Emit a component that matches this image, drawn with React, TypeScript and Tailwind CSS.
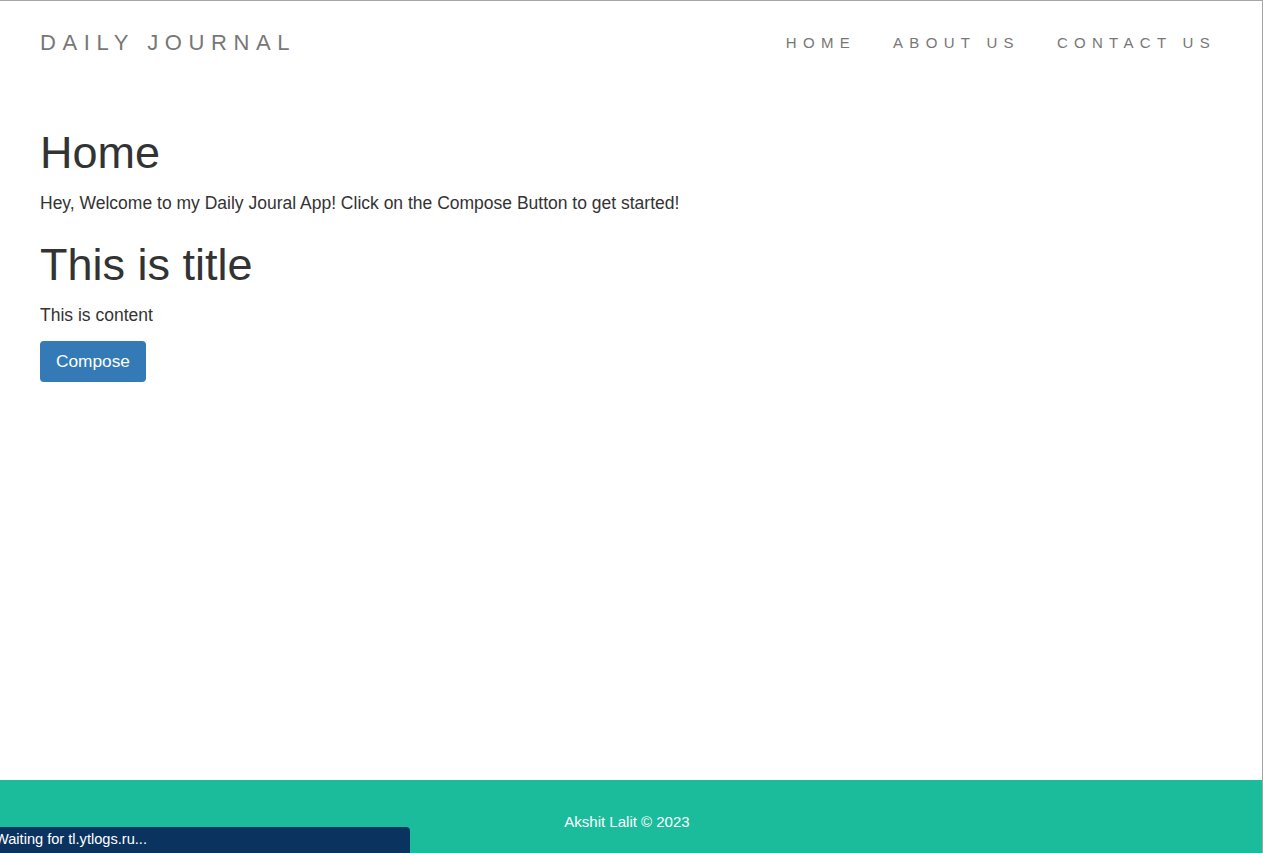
import React from 'react';

const navLinks = ['HOME', 'ABOUT US', 'CONTACT US'];

const posts = [{ title: 'This is title', content: 'This is content' }];

export default function App() {
  return (
    <div className="relative flex flex-col min-h-[853px] w-[1263px] border-t border-r border-[#a5a5a5] bg-white font-['Liberation_Sans',Arial,sans-serif] text-[#333]">
      <nav className="flex items-center justify-between h-[84px] pl-10 pr-[46px]">
        <span className="-mt-[2px] text-[22px] tracking-[0.3em] text-[#777]">DAILY JOURNAL</span>
        <ul className="flex gap-[37px]">
          {navLinks.map((link) => (
            <li key={link} className="text-[15px] tracking-[6.3px] text-[#777]">
              {link}
            </li>
          ))}
        </ul>
      </nav>

      <main className="flex-1 px-10 pt-[43px]">
        <h1 className="text-[45px] leading-[50px]">Home</h1>
        <p className="mt-[12px] text-[17.5px] leading-[26px]">
          Hey, Welcome to my Daily Joural App! Click on the Compose Button to get started!
        </p>
        {posts.map((post) => (
          <div key={post.title}>
            <h1 className="mt-[24px] text-[45px] leading-[50px]">{post.title}</h1>
            <p className="mt-[12px] text-[17.5px] leading-[26px]">{post.content}</p>
          </div>
        ))}
        <button className="mt-[13px] h-[41px] px-4 rounded bg-[#337ab7] text-[17.3px] text-white">
          Compose
        </button>
      </main>

      <footer className="h-[73px] pt-[33px] pr-2 bg-[#1abc9c] text-center text-[15px] leading-[18px] text-white">
        Akshit Lalit © 2023
      </footer>

      <div className="absolute left-0 bottom-0 flex items-center w-[410px] h-[26px] rounded-tr bg-[#0b3360] text-[14.6px] text-white">
        <span className="-ml-[5px]">Waiting for tl.ytlogs.ru...</span>
      </div>
    </div>
  );
}
